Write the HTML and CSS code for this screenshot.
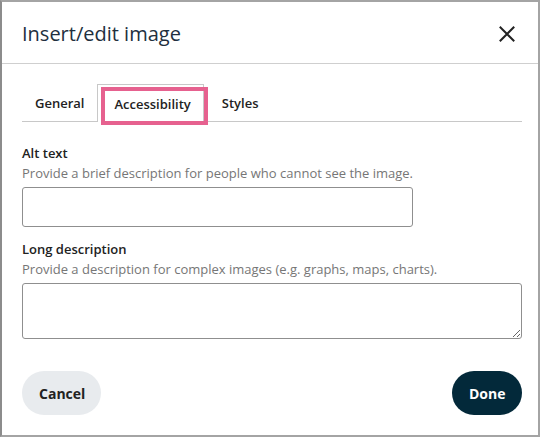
FILE: index.html
```html
<!DOCTYPE html>
<html lang="en">
<head>
<meta charset="utf-8">
<title>Insert/edit image</title>
<link rel="stylesheet" href="styles.css">
</head>
<body>
<div class="dialog">
  <div class="header">
    <h1 class="title">Insert/edit image</h1>
    <button class="close" aria-label="Close">
      <svg width="16" height="16" viewBox="0 0 16 16"><path d="M1.5 1.5 L14.5 14.5 M14.5 1.5 L1.5 14.5" stroke="#222" stroke-width="2" stroke-linecap="square" fill="none"/></svg>
    </button>
  </div>
  <div class="body">
    <div class="tabs">
      <div class="tab">General</div>
      <div class="tab active">Accessibility</div>
      <div class="tab">Styles</div>
    </div>
    <div class="field">
      <label class="label">Alt text</label>
      <div class="help">Provide a brief description for people who cannot see the image.</div>
      <input class="input" type="text">
    </div>
    <div class="field">
      <label class="label">Long description</label>
      <div class="help">Provide a description for complex images (e.g. graphs, maps, charts).</div>
      <textarea class="textarea"></textarea>
    </div>
  </div>
  <div class="footer">
    <button class="btn cancel">Cancel</button>
    <button class="btn done">Done</button>
  </div>
</div>
</body>
</html>
```
FILE: styles.css
```css
* { box-sizing: border-box; }
html, body { margin: 0; padding: 0; background: #fff; }
body { font-family: "Open Sans", "Liberation Sans", sans-serif; color: #222; }
.dialog {
  width: 540px;
  height: 437px;
  border: 2px solid #a4a4a4;
  border-left-color: #8c8c8c;
  background: #fff;
  display: flex;
  flex-direction: column;
}
.header {
  height: 62px;
  border-bottom: 1px solid #cfcfcf;
  display: flex;
  align-items: center;
  justify-content: space-between;
  padding: 0 19px 0 20px;
}
.title {
  margin: 0;
  font-size: 20px;
  font-weight: 500;
  color: #222f3e;
  padding-top: 1px;
}
.close {
  border: 0;
  background: none;
  width: 24px;
  height: 24px;
  padding: 0;
  display: flex;
  align-items: center;
  justify-content: center;
  margin-top: 2px;
}
.body {
  padding: 20px 16px 0 20px;
  flex: 1;
}
.tabs {
  display: flex;
  gap: 5px;
  border-bottom: 1px solid #c8c8c8;
  height: 38px;
}
.tab {
  height: 37px;
  padding: 0 13px;
  display: flex;
  align-items: center;
  font-size: 13px;
  font-weight: 600;
  color: #222;
  position: relative;
}
.active {
  border: 1px solid #c8c8c8;
  border-bottom: 0;
  padding: 0 12px 0 16px;
  margin-left: -5px;
  background: #fff;
  height: 38px;
}
.active::after {
  content: "";
  position: absolute;
  left: 3px;
  top: 2px;
  right: -5px;
  bottom: -3px;
  border: 4px solid #e6618f;
}
.field { margin-top: 22px; }
.field + .field { margin-top: 13px; }
.label {
  display: block;
  font-size: 13px;
  font-weight: 600;
  color: #222;
  line-height: 18px;
}
.help {
  font-size: 13px;
  color: #767676;
  line-height: 18px;
  margin-top: 2px;
}
.input {
  display: block;
  width: 391px;
  height: 40px;
  margin-top: 5px;
  border: 1px solid #8f8f8f;
  border-radius: 3px;
  font: inherit;
}
.textarea {
  display: block;
  width: 500px;
  height: 56px;
  margin-top: 5px;
  border: 1px solid #8f8f8f;
  border-radius: 3px;
  font: inherit;
  resize: both;
}
.footer {
  display: flex;
  justify-content: space-between;
  padding: 0 16px 20px 20px;
}
.btn {
  border: 0;
  height: 44px;
  border-radius: 22px;
  font-family: "Open Sans", "Liberation Sans", sans-serif;
  font-size: 14px;
  font-weight: 700;
  padding: 0 17px;
}
.cancel { background: #e8ebee; color: #222; width: 79px; }
.done { background: #03293a; color: #fff; width: 70px; }
```
